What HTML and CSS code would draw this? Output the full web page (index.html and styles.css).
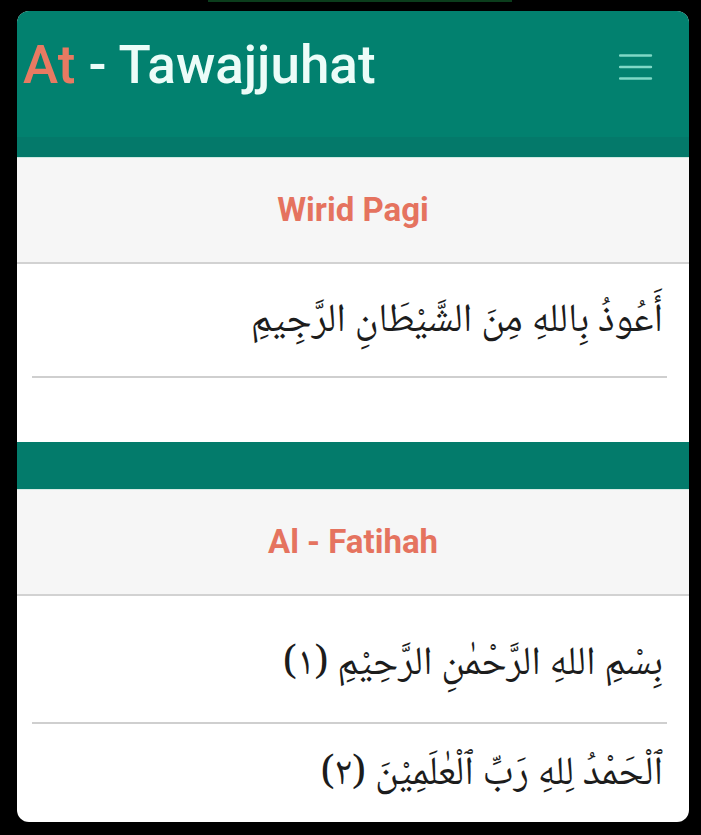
FILE: index.html
```html
<!DOCTYPE html>
<html lang="id">
<head>
<meta charset="utf-8">
<title>At - Tawajjuhat</title>
<link rel="stylesheet" href="styles.css">
</head>
<body>
<div class="notch"></div>
<main class="card">
  <header class="appbar">
    <h1 class="brand"><span class="brand-accent">At</span> - Tawajjuhat</h1>
    <button class="menu" aria-label="Menu">
      <svg width="34" height="26" viewBox="0 0 34 26"><path d="M1 1.5H32M1 13H32M1 24.5H32" stroke="#7fd8c6" stroke-width="2.4" stroke-linecap="round"/></svg>
    </button>
  </header>
  <div class="band band-top"></div>
  <section class="section">
    <h2 class="section-title">Wirid Pagi</h2>
    <p class="ayah ayah-a" dir="rtl">أَعُوذُ بِاللهِ مِنَ الشَّيْطَانِ الرَّجِيمِ</p>
    <hr class="divider">
    <div class="spacer"></div>
  </section>
  <div class="band band-mid"></div>
  <section class="section">
    <h2 class="section-title">Al - Fatihah</h2>
    <p class="ayah ayah-b" dir="rtl">بِسْمِ اللهِ الرَّحْمٰنِ الرَّحِيْمِ (١)</p>
    <hr class="divider">
    <p class="ayah ayah-c" dir="rtl">ٱلْحَمْدُ لِلهِ رَبِّ ٱلْعٰلَمِيْنَ (٢)</p>
  </section>
</main>
</body>
</html>
```
FILE: styles.css
```css
* { box-sizing: border-box; }
html, body { height: 100%; }
body {
  margin: 0;
  background: #000;
  padding: 0 12px 0 17px;
  font-family: Roboto, "Liberation Sans", sans-serif;
}
.notch {
  height: 2px;
  width: 304px;
  margin-left: 191px;
  margin-bottom: 9px;
  background: #0b3d1c;
}
.card {
  width: 672px;
  height: 811px;
  background: #fff;
  border-radius: 12px;
  overflow: hidden;
  display: flex;
  flex-direction: column;
}
.appbar {
  height: 126px;
  flex: none;
  background: #02816f;
  display: flex;
  align-items: flex-start;
  justify-content: space-between;
  padding: 26px 36px 0 6px;
}
.brand {
  margin: 0;
  font-size: 53px;
  font-weight: 500;
  line-height: 56px;
  color: #ecfcf8;
  letter-spacing: 0;
}
.brand-accent { color: #e87a62; }
.menu {
  border: 0;
  background: none;
  padding: 0;
  margin-top: 17px;
  display: block;
}
.menu svg { display: block; }
.band {
  flex: none;
  background: #04796a;
}
.band-top {
  height: 21px;
  border-bottom: 1px solid #cfe9e3;
}
.band-mid {
  height: 48px;
  background: #037b6b;
  border-bottom: 1px solid #d7ece6;
}
.section { display: flex; flex-direction: column; }
.section-title {
  margin: 0;
  height: 106px;
  background: #f6f6f6;
  border-bottom: 2px solid #d2d2d2;
  color: #e5735f;
  font-size: 33px;
  font-weight: 700;
  text-align: center;
  line-height: 104px;
}
.ayah {
  margin: 0;
  padding: 0 26px 0 26px;
  font-family: "Noto Naskh Arabic", "Noto Sans Arabic", "DejaVu Sans", sans-serif;
  font-size: 40px;
  line-height: 50px;
  color: #1c1c1c;
  text-align: right;
}
.ayah-a { padding-top: 33px; padding-bottom: 29px; }
.ayah-b { padding-top: 44px; padding-bottom: 32px; }
.ayah-c { padding-top: 26px; }
.divider {
  margin: 0 22px 0 15px;
  border: 0;
  height: 2px;
  background: #cfcfcf;
}
.spacer { height: 64px; }
```
